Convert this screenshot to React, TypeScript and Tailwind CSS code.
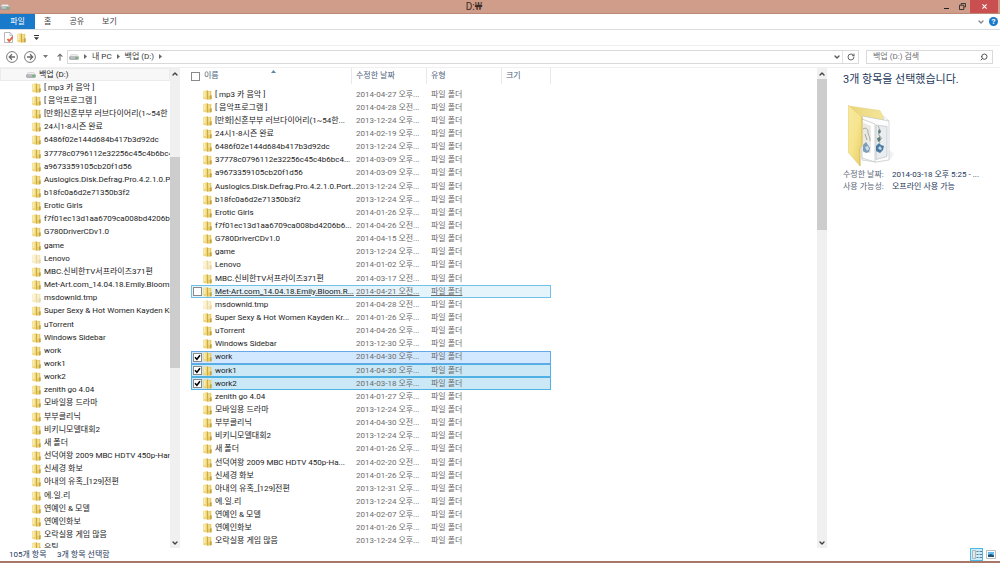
import { ChevronDown, ChevronUp, RotateCw, Search } from "lucide-react";

interface Entry {
  name: string;
  short?: string;
  date: string;
  half: "오전" | "오후";
  faded?: boolean;
  state?: "hover" | "focused" | "selected";
}

const entries: Entry[] = [
  { name: "[ mp3 카 음악 ]", date: "2014-04-27", half: "오후" },
  { name: "[ 음악프로그램 ]", date: "2014-04-28", half: "오전" },
  {
    name: "[만화]신혼부부 러브다이어리(1~54한",
    short: "[만화]신혼부부 러브다이어리(1~54한...",
    date: "2013-12-24",
    half: "오후",
  },
  { name: "24시1-8시즌 완료", date: "2014-02-19", half: "오후" },
  { name: "6486f02e144d684b417b3d92dc", date: "2013-12-24", half: "오후" },
  {
    name: "37778c0796112e32256c45c4b6bc4e",
    short: "37778c0796112e32256c45c4b6bc4...",
    date: "2014-03-09",
    half: "오후",
  },
  { name: "a9673359105cb20f1d56", date: "2014-03-09", half: "오후" },
  {
    name: "Auslogics.Disk.Defrag.Pro.4.2.1.0.Port",
    short: "Auslogics.Disk.Defrag.Pro.4.2.1.0.Port...",
    date: "2013-12-24",
    half: "오후",
  },
  { name: "b18fc0a6d2e71350b3f2", date: "2013-12-24", half: "오후" },
  { name: "Erotic Girls", date: "2014-01-26", half: "오후" },
  {
    name: "f7f01ec13d1aa6709ca008bd4206b63",
    short: "f7f01ec13d1aa6709ca008bd4206b6...",
    date: "2014-04-26",
    half: "오전",
  },
  { name: "G780DriverCDv1.0", date: "2014-04-15", half: "오전" },
  { name: "game", date: "2013-12-24", half: "오후" },
  { name: "Lenovo", date: "2014-01-02", half: "오후", faded: true },
  { name: "MBC.신비한TV서프라이즈371편", date: "2014-03-17", half: "오전" },
  {
    name: "Met-Art.com_14.04.18.Emily.Bloom.R",
    short: "Met-Art.com_14.04.18.Emily.Bloom.R...",
    date: "2014-04-21",
    half: "오전",
    state: "hover",
  },
  { name: "msdownld.tmp", date: "2014-04-28", half: "오전", faded: true },
  {
    name: "Super Sexy & Hot Women Kayden Kr",
    short: "Super Sexy & Hot Women Kayden Kr...",
    date: "2014-01-26",
    half: "오후",
  },
  { name: "uTorrent", date: "2014-04-26", half: "오후" },
  { name: "Windows Sidebar", date: "2013-12-30", half: "오후" },
  { name: "work", date: "2014-04-30", half: "오후", state: "focused" },
  { name: "work1", date: "2014-04-30", half: "오후", state: "selected" },
  { name: "work2", date: "2014-03-18", half: "오후", state: "selected" },
  { name: "zenith go 4.04", date: "2014-01-27", half: "오후" },
  { name: "모바일용 드라마", date: "2013-12-24", half: "오후" },
  { name: "부부클리닉", date: "2014-04-30", half: "오전" },
  { name: "비키니모델대회2", date: "2013-12-24", half: "오후" },
  { name: "새 폴더", date: "2014-01-26", half: "오후" },
  {
    name: "선덕여왕 2009 MBC HDTV 450p-Han",
    short: "선덕여왕 2009 MBC HDTV 450p-Ha...",
    date: "2014-02-20",
    half: "오전",
  },
  { name: "신세경 화보", date: "2014-01-26", half: "오후" },
  { name: "아내의 유혹_[129]전편", date: "2013-12-31", half: "오후" },
  { name: "에.일.리", date: "2013-12-24", half: "오후" },
  { name: "연예인 & 모델", date: "2014-02-07", half: "오후" },
  { name: "연예인화보", date: "2014-01-26", half: "오후" },
  { name: "오락실용 게임 많음", date: "2013-12-24", half: "오후" },
];

const rowStyles = {
  hover: "bg-[#e5f3fb] outline outline-1 -outline-offset-1 outline-[#70c0e7]",
  focused: "bg-[#d1e8ff] outline outline-1 -outline-offset-1 outline-[#66a7e8]",
  selected:
    "bg-[#cbe8f6] outline outline-1 -outline-offset-1 outline-[#4fb2e3]",
};

function FolderIcon({ faded }: { faded?: boolean }) {
  return (
    <svg
      viewBox="0 0 9 10"
      className={`h-[10px] w-[9px] shrink-0 ${faded ? "opacity-45" : ""}`}
      aria-hidden="true"
    >
      <path d="M.3 1L4 .2v9.300L.3 9z" fill="#f0d67a" />
      <path d="M1 1.500l1.500-.4v6L1 7z" fill="#faedb0" />
      <path d="M4 .2l1 .6v9l-1-.3z" fill="#cdaa4a" />
      <path d="M5 1.300L8.300.8v8.500L5 9.800z" fill="#e8cc68" />
      <path d="M5.600 2l1-.2v4l-1 .2z" fill="#fbeeb0" />
      <path d="M7 5.500l1.700-.3v3.800L7 9.400z" fill="#c4a444" />
    </svg>
  );
}

function DriveIcon() {
  return (
    <svg viewBox="0 0 20 12" className="h-[6px] w-[10px] shrink-0" aria-hidden="true">
      <path d="M4 1h12l3 5H1z" fill="#eeeeef" stroke="#bcbec1" strokeWidth=".8" />
      <rect x="1" y="5.500" width="18" height="5.500" rx="1.500" fill="#a9acb0" stroke="#7d8185" strokeWidth=".8" />
      <path d="M3 7h9v1.500H3z" fill="#d5d7da" />
      <rect x="13" y="6.500" width="4" height="3" fill="#4cc653" />
    </svg>
  );
}

function BigFolder() {
  return (
    <svg viewBox="0 0 46 62" className="ml-[5px] h-[62px] w-[46px]" aria-hidden="true">
      <defs>
        <linearGradient id="cover" x1="0" y1="0" x2="1" y2="1">
          <stop offset="0" stopColor="#f7e9a1" />
          <stop offset=".5" stopColor="#f6e48e" />
          <stop offset="1" stopColor="#e8cd63" />
        </linearGradient>
        <linearGradient id="back" x1="0" y1="0" x2="1" y2="0">
          <stop offset="0" stopColor="#ead57c" />
          <stop offset="1" stopColor="#f5e89c" />
        </linearGradient>
      </defs>
      <path d="M40 44l6 5-4 6-14 3z" fill="#f1f1f1" />
      <path d="M1 1l31 4.500 4 7.500 5 3-27 6z" fill="url(#back)" stroke="#dfc974" strokeWidth=".4" />
      <path d="M35 11l5 4v5l-4-3z" fill="#fafafa" stroke="#c8c8c8" strokeWidth=".5" />
      <path d="M14 11l27 5v39l-13 2-14-2z" fill="#fdfdfd" stroke="#b9c0c4" strokeWidth=".6" />
      <path d="M28 20l11 1.500v30l-11 3z" fill="#e9edef" stroke="#b4bbc2" strokeWidth=".6" />
      <path d="M14 14l13 5v38l-13-4z" fill="#ffffff" stroke="#b6b6b6" strokeWidth=".6" />
      <path d="M14 17l9 4v27l-9-1z" fill="#ebe9e4" />
      <path d="M15 24c3-2 5 0 5 3s2 4 2 9M30 21c3 3-1 6 1 9s-1 5 1 8M31 30l3 4M17 29l2 6" fill="none" stroke="#a3aaa0" strokeWidth="1" />
      <path d="M30 26l2-2 1 3-2 2zM29 33l3-1 1 3-3 2z" fill="#5d7d78" />
      <path d="M15 40l3-3 2 3 2 3-1 4-3 1-3-2z" fill="#7c9cb9" />
      <path d="M17 42l3-1 1 3-2 2z" fill="#cddfeb" />
      <path d="M28 41l3-3 2 2 3 1-1 4-3 3-4-2z" fill="#4c7aa3" />
      <path d="M30 43l2-2 2 3-2 1z" fill="#c3dcec" />
      <path d="M0 0l14 12v28l-2 3v18L0 47z" fill="url(#cover)" stroke="#ddc46b" strokeWidth=".5" />
      <path d="M14 12v28l-2 3v18" fill="none" stroke="#d2b452" strokeWidth=".7" />
    </svg>
  );
}

function CheckBox({ label, checked }: { label: string; checked?: boolean }) {
  return (
    <span className="relative block size-[9px]">
      <input
        type="checkbox"
        aria-label={label}
        defaultChecked={checked}
        className="peer block size-[9px] appearance-none border border-[#8a8a8a] bg-white"
      />
      <svg
        viewBox="0 0 9 9"
        className="pointer-events-none absolute inset-0 hidden peer-checked:block"
        aria-hidden="true"
      >
        <path d="M2 4.300l1.900 2L7 2.300" fill="none" stroke="#000" strokeWidth="1.500" />
      </svg>
    </span>
  );
}

function ScrollBar({ start, size }: { start: number; size: number }) {
  return (
    <div className="flex w-[10px] shrink-0 flex-col bg-[#f0f0f0]">
      <button aria-label="위로" className="flex h-[11px] items-center justify-center">
        <ChevronUp size={8} strokeWidth={4} color="#404040" />
      </button>
      <div className="flex-1">
        <div style={{ height: `${start}%` }} />
        <div className="bg-[#cdcdcd]" style={{ height: `${size}%` }} />
      </div>
      <button aria-label="아래로" className="flex h-[11px] items-center justify-center">
        <ChevronDown size={8} strokeWidth={4} color="#404040" />
      </button>
    </div>
  );
}

function TitleBar() {
  return (
    <header className="flex h-[14px] shrink-0 items-center border-b border-[#bd8a78] bg-[#cf9d89]">
      <DriveIcon />
      <h1 className="flex-1 text-center text-[10px] leading-[14px] text-[#3b2b26]">D:₩</h1>
      <button aria-label="최소화" className="flex h-[13px] w-4 items-center justify-center">
        <span className="mt-1 h-px w-[5px] bg-[#222222]" />
      </button>
      <button aria-label="이전 크기로" className="flex h-[13px] w-4 items-center justify-center">
        <svg viewBox="0 0 8 8" className="size-[7px]" fill="none" stroke="#222222">
          <path d="M2.500 2V.5h5v4H6" />
          <path d="M.5 2.500h5v5h-5z" />
        </svg>
      </button>
      <button
        aria-label="닫기"
        className="mr-0.5 flex h-[13px] w-7 items-center justify-center bg-[#c94f50]"
      >
        <svg viewBox="0 0 6 6" className="size-[5px]" stroke="#ffffff" strokeWidth="1.300">
          <path d="M.5.5l5 5M5.500.5l-5 5" />
        </svg>
      </button>
    </header>
  );
}

function Ribbon() {
  return (
    <>
      <nav className="flex h-4 shrink-0 items-center border-b border-[#dadbdc] text-[#444444]">
        <button className="h-full w-[35px] bg-[#1979ca] text-white">파일</button>
        <button className="ml-[9px]">홈</button>
        <button className="ml-[18px]">공유</button>
        <button className="ml-[18px]">보기</button>
        <button aria-label="리본 확장" className="mr-1 ml-auto">
          <ChevronDown size={8} strokeWidth={4} color="#888888" />
        </button>
        <button
          aria-label="도움말"
          className="mr-0.5 size-[9px] rounded-full bg-[#1979ca] text-center leading-[9px] font-bold text-white"
        >
          ?
        </button>
      </nav>
      <div className="flex h-4 shrink-0 items-center gap-1 border-b border-[#eeeeee] px-1">
        <button aria-label="속성">
          <svg viewBox="0 0 9 11" className="h-[11px] w-[9px]">
            <path d="M.5.5h5.500l2.500 2.500v7.500h-8z" fill="#fff" stroke="#a3a8ad" strokeWidth=".8" />
            <path d="M6 .5v3h2.500" fill="none" stroke="#a3a8ad" strokeWidth=".7" />
            <path d="M3.500 7l1.700 2L9 4.500" fill="none" stroke="#e0653c" strokeWidth="1.900" />
          </svg>
        </button>
        <button aria-label="새 폴더">
          <FolderIcon />
        </button>
        <button aria-label="빠른 실행 도구 모음" className="ml-1">
          <svg viewBox="0 0 5 5" className="size-[5px]" fill="#333333">
            <path d="M0 0h5v1H0zM0 2.200h5L2.500 5z" />
          </svg>
        </button>
      </div>
    </>
  );
}

function Crumb() {
  return (
    <svg viewBox="0 0 3 5" className="h-[5px] w-[3px]" fill="#666666">
      <path d="M0 0l3 2.500L0 5z" />
    </svg>
  );
}

function AddressBar() {
  return (
    <div className="flex h-[22px] shrink-0 items-center border-b border-[#f0f0f0] pr-[7px] pl-[6px] text-[#333333]">
      {["뒤로", "앞으로"].map((label, i) => (
        <button key={label} aria-label={label} className="mr-[6px]">
          <svg
            viewBox="0 0 12 12"
            className={`size-3 ${i === 1 ? "rotate-180" : ""}`}
            fill="none"
            stroke="#6a6a6a"
          >
            <circle cx="6" cy="6" r="5.400" strokeWidth=".9" />
            <path d="M9 6H3.500M6 3.300L3.300 6 6 8.700" strokeWidth="1.300" />
          </svg>
        </button>
      ))}
      <button aria-label="최근 위치" className="mr-[9px] ml-px">
        <svg viewBox="0 0 5 3" className="h-[3px] w-[5px]" fill="#777777">
          <path d="M0 0h5L2.500 3z" />
        </svg>
      </button>
      <button aria-label="위로 이동" className="mr-1">
        <svg viewBox="0 0 7 9" className="h-[8px] w-[6px]" fill="none" stroke="#666666" strokeWidth="1.200">
          <path d="M3.500 9V1.200M.7 4l2.800-2.800L6.300 4" />
        </svg>
      </button>
      <div className="flex h-[14px] flex-1 items-center border border-[#d9d9d9]">
        <div className="flex flex-1 items-center gap-[5px] pl-px">
          <DriveIcon />
          <Crumb />
          <a href="#pc">내 PC</a>
          <Crumb />
          <a href="#d">백업 (D:)</a>
          <Crumb />
        </div>
        <button aria-label="이전 위치" className="mr-px">
          <ChevronDown size={8} strokeWidth={4} color="#555555" />
        </button>
        <button
          aria-label="새로 고침"
          className="flex h-full w-4 items-center justify-center border-l border-[#e3e3e3]"
        >
          <RotateCw size={8} strokeWidth={3} color="#666666" />
        </button>
      </div>
      <label className="ml-[7px] flex h-[14px] w-[127px] items-center border border-[#d9d9d9] pr-1 pl-[6px]">
        <input
          type="text"
          aria-label="검색"
          placeholder="백업 (D:) 검색"
          className="min-w-0 flex-1 placeholder:text-[#6d6d6d] placeholder:opacity-100"
        />
        <Search size={8} strokeWidth={3} color="#555555" className="-scale-x-100" />
      </label>
    </div>
  );
}

function FolderTree() {
  return (
    <aside className="flex w-[180px] shrink-0">
      <ul className="flex min-w-0 flex-1 flex-col overflow-hidden whitespace-nowrap">
        <li className="flex min-h-0 flex-1 items-center gap-[3px] bg-[#f7f7f7] pl-[26px] outline outline-1 -outline-offset-1 outline-[#ececec]">
          <DriveIcon />
          백업 (D:)
        </li>
        {entries.map((entry) => (
          <li key={entry.name} className="flex min-h-0 flex-1 items-center gap-[3px] pl-8">
            <FolderIcon faded={entry.faded} />
            {entry.name}
          </li>
        ))}
        <li className="flex min-h-0 flex-[0.5] items-start gap-[3px] overflow-hidden pl-8">
          <FolderIcon />
          유틸
        </li>
      </ul>
      <ScrollBar start={17} size={46} />
    </aside>
  );
}

function FileList() {
  return (
    <section className="flex min-w-0 flex-1 pl-[11px]">
      <div className="min-w-0 flex-1">
        <table className="h-full w-[360px] table-fixed whitespace-nowrap">
          <thead>
            <tr className="h-5 text-left align-top text-[#4c607a] *:font-normal">
              <th className="w-[161px]">
                <div className="relative flex h-4 items-center gap-1 border-r border-[#e5e9ee]">
                  <CheckBox label="모두 선택" />
                  이름
                  <svg
                    viewBox="0 0 5 3"
                    className="absolute top-0.5 left-1/2 h-[3px] w-[5px]"
                    fill="#5a87a8"
                  >
                    <path d="M0 3h5L2.500 0z" />
                  </svg>
                </div>
              </th>
              <th className="w-[75px]">
                <div className="h-4 border-r border-[#e5e9ee] pl-1 leading-4">수정한 날짜</div>
              </th>
              <th className="w-[75px]">
                <div className="h-4 border-r border-[#e5e9ee] pl-1 leading-4">유형</div>
              </th>
              <th>
                <div className="h-4 border-r border-[#e5e9ee] pl-1 leading-4">크기</div>
              </th>
            </tr>
          </thead>
          <tbody>
            {entries.map(({ name, short, date, half, faded, state }) => (
              <tr
                key={name}
                className={`text-[#6d6d6d] ${state ? rowStyles[state] : ""} ${
                  state === "hover" ? "underline" : ""
                }`}
              >
                <td className="text-[#1b1b1b]">
                  <div className="flex items-center pl-0.5">
                    <div className="w-[10px] shrink-0">
                      {state && <CheckBox label={name} checked={state !== "hover"} />}
                    </div>
                    <FolderIcon faded={faded} />
                    <span className="ml-[3px]">{short ?? name}</span>
                  </div>
                </td>
                <td className="pl-1">{`${date} ${half}...`}</td>
                <td className="pl-1">파일 폴더</td>
                <td />
              </tr>
            ))}
          </tbody>
        </table>
      </div>
      <ScrollBar start={0} size={33} />
    </section>
  );
}

function DetailsPane() {
  return (
    <aside className="w-[173px] shrink-0 pt-[5px] pl-4 text-[#1e395b]">
      <h2 className="mb-[18px] text-[11px] leading-[14px]">3개 항목을 선택했습니다.</h2>
      <BigFolder />
      <dl className="mt-0.5 grid grid-cols-[49px_1fr] leading-[12px]">
        <dt className="text-[#5a6779]">수정한 날짜:</dt>
        <dd>2014-03-18 오후 5:25 - ...</dd>
        <dt className="text-[#5a6779]">사용 가능성:</dt>
        <dd>오프라인 사용 가능</dd>
      </dl>
    </aside>
  );
}

function StatusBar() {
  return (
    <footer className="flex h-[15px] shrink-0 items-center border-b-2 border-[#a87767] pr-1 pl-[9px] text-[#1e395b]">
      <span className="w-12">105개 항목</span>
      <span>3개 항목 선택함</span>
      <button
        aria-label="자세히"
        className="mr-[3px] ml-auto flex size-[13px] items-center justify-center border border-[#4fb9e6] bg-[#cdecf9]"
      >
        <svg viewBox="0 0 10 9" className="h-[9px] w-[10px]">
          <path d="M.5.5h3v8h-3z" fill="#e6e6e6" stroke="#9aa5ad" strokeWidth=".7" />
          <path d="M4.500 1.500h2M4.500 4.500h2M4.500 7.500h2M7.500 1.500H10M7.500 4.500H10M7.500 7.500H10" stroke="#5d7d93" />
        </svg>
      </button>
      <button aria-label="큰 아이콘">
        <svg viewBox="0 0 10 9" className="h-[9px] w-[10px]">
          <path d="M.5.5h9v8h-9z" fill="#ffffff" stroke="#b9bec3" />
          <path d="M2 2h6v5H2z" fill="#63b9ea" />
          <path d="M2 5l3-1 3 1.500V7H2z" fill="#244f77" />
        </svg>
      </button>
    </footer>
  );
}

export default function App() {
  return (
    <div className="flex h-screen flex-col bg-white font-['Roboto','Noto_Sans_CJK_KR',sans-serif] text-[8px] leading-[12px] text-[#1b1b1b]">
      <TitleBar />
      <Ribbon />
      <AddressBar />
      <main className="flex min-h-0 flex-1">
        <FolderTree />
        <FileList />
        <DetailsPane />
      </main>
      <StatusBar />
    </div>
  );
}
